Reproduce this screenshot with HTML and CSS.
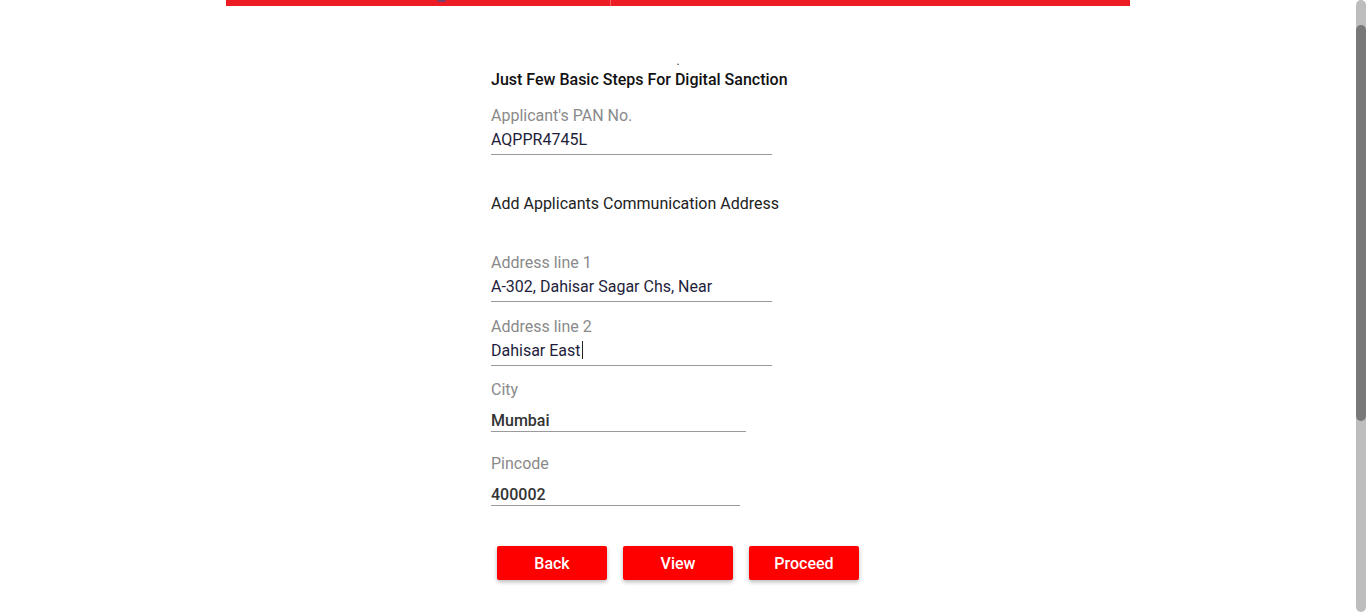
FILE: index.html
```html
<!DOCTYPE html>
<html lang="en">
<head>
<meta charset="utf-8">
<title>Digital Sanction</title>
<link rel="stylesheet" href="styles.css">
</head>
<body>
<div class="page">
  <div class="main">
    <div class="topbar">
      <div class="topbar-left"><span class="logo-tail"></span></div>
      <div class="topbar-divider"></div>
      <div class="topbar-right"></div>
    </div>
    <form class="form">
      <div class="dot">.</div>
      <h1 class="heading">Just Few Basic Steps For Digital Sanction</h1>
      <div class="field field-pan">
        <label class="label">Applicant's PAN No.</label>
        <div class="input">AQPPR4745L</div>
      </div>
      <div class="section-title">Add Applicants Communication Address</div>
      <div class="field field-addr1">
        <label class="label">Address line 1</label>
        <div class="input">A-302, Dahisar Sagar Chs, Near</div>
      </div>
      <div class="field field-addr2">
        <label class="label">Address line 2</label>
        <div class="input">Dahisar East<span class="caret"></span></div>
      </div>
      <div class="field field-city">
        <label class="label">City</label>
        <div class="input input-bold input-city">Mumbai</div>
      </div>
      <div class="field field-pin">
        <label class="label">Pincode</label>
        <div class="input input-bold input-pin">400002</div>
      </div>
      <div class="actions">
        <button type="button" class="btn">Back</button>
        <button type="button" class="btn">View</button>
        <button type="button" class="btn">Proceed</button>
      </div>
    </form>
  </div>
  <div class="scrollbar"><div class="scroll-track"><div class="scroll-thumb"></div></div></div>
</div>
</body>
</html>
```
FILE: styles.css
```css
* { box-sizing: border-box; }
html, body { margin: 0; padding: 0; height: 100%; overflow: hidden; background: #fff; }
body { font-family: Roboto, "Liberation Sans", Arial, sans-serif; color: #222; }

.page { display: flex; height: 612px; }
.main { flex: 1; min-width: 0; }

.topbar { width: 904px; height: 6px; margin: 0 auto; display: flex; background: #ed1c24; }
.topbar-left { width: 384px; display: flex; }
.logo-tail { width: 9px; height: 2px; margin-left: 211px; border-radius: 0 0 5px 5px; background: #7a3c68; }
.topbar-divider { width: 1px; background: #f2616a; }
.topbar-right { flex: 1; }

.form { width: 374px; margin: 0 auto; display: flex; flex-direction: column; }
.dot { text-align: center; font-size: 12px; line-height: 12px; height: 12px; margin-top: 49px; color: #333; }
.heading { margin: 3px 0 0; font-size: 16px; font-weight: 500; line-height: 19px; color: #111; }

.field { display: flex; flex-direction: column; }
.label { font-size: 16px; line-height: 19px; color: #8a8a8a; }
.input { margin-top: 2px; width: 281px; height: 28px; padding-bottom: 3px; font-size: 16px; line-height: 19px; color: #1e1e3c; border-bottom: 1px solid #9a9a9a; display: flex; align-items: center; }
.input-bold { font-weight: 500; color: #333; }
.input-city { width: 255px; margin-top: 10px; height: 23px; padding-bottom: 0; }
.input-pin { width: 249px; margin-top: 10px; height: 23px; padding-bottom: 0; }
.caret { width: 1px; height: 18px; background: #222; margin-left: 1px; }

.field-pan { margin-top: 17px; }
.section-title { margin-top: 39px; font-size: 16px; line-height: 19px; color: #222; }
.field-addr1 { margin-top: 40px; }
.field-addr2 { margin-top: 15px; }
.field-city { margin-top: 14px; }
.field-pin { margin-top: 22px; }

.actions { display: flex; justify-content: center; gap: 16px; margin-top: 40px; }
.btn { width: 110px; height: 34px; border: 0; border-radius: 2px; background: #ff0000; color: #fff; font-family: Roboto, "Liberation Sans", Arial, sans-serif; font-size: 16px; font-weight: 500; box-shadow: 0 2px 4px rgba(0,0,0,0.28); padding: 0; cursor: pointer; }

.scrollbar { width: 10px; height: 612px; background: #fff; }
.scroll-track { height: 100%; border-radius: 5px; background: #bdbdbd; padding-top: 25px; }
.scroll-thumb { height: 396px; border-radius: 5px; background: #787878; }
```
